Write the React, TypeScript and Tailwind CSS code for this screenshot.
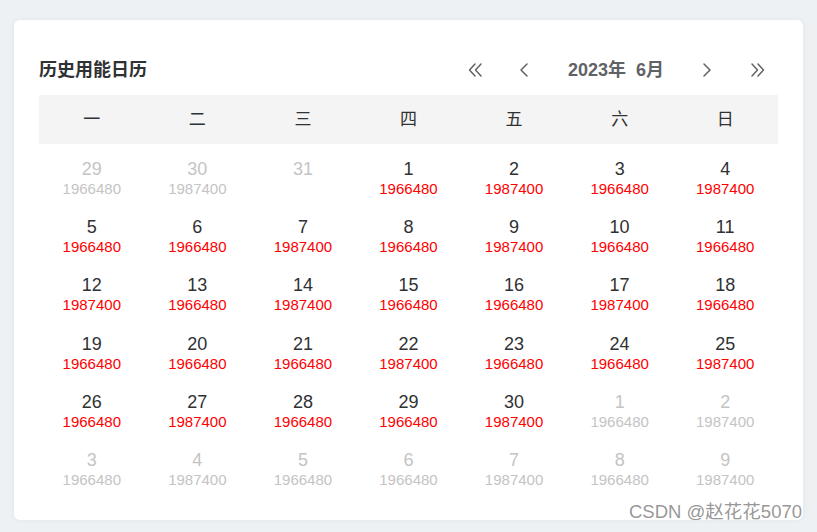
import React from 'react'

const A = '1966480'
const B = '1987400'

type Cell = { day: number; value?: string; other?: boolean }

const weekdays = ['一', '二', '三', '四', '五', '六', '日']

const cells: Cell[] = [
  { day: 29, value: A, other: true },
  { day: 30, value: B, other: true },
  { day: 31, other: true },
  { day: 1, value: A },
  { day: 2, value: B },
  { day: 3, value: A },
  { day: 4, value: B },
  { day: 5, value: A },
  { day: 6, value: A },
  { day: 7, value: B },
  { day: 8, value: A },
  { day: 9, value: B },
  { day: 10, value: A },
  { day: 11, value: A },
  { day: 12, value: B },
  { day: 13, value: A },
  { day: 14, value: B },
  { day: 15, value: A },
  { day: 16, value: A },
  { day: 17, value: B },
  { day: 18, value: A },
  { day: 19, value: A },
  { day: 20, value: A },
  { day: 21, value: A },
  { day: 22, value: B },
  { day: 23, value: A },
  { day: 24, value: A },
  { day: 25, value: B },
  { day: 26, value: A },
  { day: 27, value: B },
  { day: 28, value: A },
  { day: 29, value: A },
  { day: 30, value: B },
  { day: 1, value: A, other: true },
  { day: 2, value: B, other: true },
  { day: 3, value: A, other: true },
  { day: 4, value: B, other: true },
  { day: 5, value: A, other: true },
  { day: 6, value: A, other: true },
  { day: 7, value: B, other: true },
  { day: 8, value: A, other: true },
  { day: 9, value: B, other: true },
]

function Chevron({ dir, double }: { dir: 'left' | 'right'; double?: boolean }) {
  const flip = dir === 'right' ? 'scale(-1,1) translate(-18,0)' : undefined
  return (
    <svg width="18" height="16" viewBox="0 0 18 16" fill="none" stroke="#606266" strokeWidth="1.5" strokeLinecap="round" strokeLinejoin="round">
      <g transform={flip}>
        {double ? (
          <>
            <polyline points="8,2 2.5,8 8,14" />
            <polyline points="14,2 8.5,8 14,14" />
          </>
        ) : (
          <polyline points="12,2 6,8 12,14" />
        )}
      </g>
    </svg>
  )
}

export default function App() {
  return (
    <div
      className="relative w-[817px] h-[532px] bg-[#edf1f4] pt-[20px] pl-[14px] overflow-hidden"
      style={{ fontFamily: '"Liberation Sans", "Noto Sans CJK SC", sans-serif' }}
    >
      <div className="w-[789px] h-[500px] bg-white rounded-[6px] shadow-[0_0_6px_rgba(0,0,0,0.05)] px-[25px] pt-[34px]">
        {/* Header */}
        <div className="h-[32px] flex items-center justify-between">
          <h2 className="text-[18px] font-bold text-[#303133]">历史用能日历</h2>
          <div className="flex items-center text-[#606266] mr-[12px]">
            <button className="w-[18px] flex justify-center"><Chevron dir="left" double /></button>
            <button className="ml-[30px] w-[18px] flex justify-center"><Chevron dir="left" /></button>
            <span className="ml-[35px] text-[18px] font-bold">2023年&nbsp;&nbsp;6月</span>
            <button className="ml-[34px] w-[18px] flex justify-center"><Chevron dir="right" /></button>
            <button className="ml-[32px] w-[18px] flex justify-center"><Chevron dir="right" double /></button>
          </div>
        </div>

        {/* Weekdays */}
        <div className="mt-[9px] h-[49px] bg-[#f4f4f4] grid grid-cols-7 items-center">
          {weekdays.map((w) => (
            <div key={w} className="text-center text-[17px] text-[#303133]">{w}</div>
          ))}
        </div>

        {/* Days */}
        <div className="mt-[6px] grid grid-cols-7">
          {cells.map((c, i) => (
            <div key={i} className="h-[58.2px] flex flex-col items-center justify-center">
              <div className={`h-[20px] leading-[20px] text-[18px] ${c.other ? 'text-[#c4c4c4]' : 'text-[#303133]'}`}>{c.day}</div>
              <div className={`h-[20px] leading-[20px] text-[15px] ${c.other ? 'text-[#c4c4c4]' : 'text-[#ff0000]'}`}>{c.value ?? ''}</div>
            </div>
          ))}
        </div>
      </div>

      <div className="absolute right-[15px] bottom-[6px] text-[18.5px] text-[#8a8a8a]/90 [text-shadow:0_0_2px_rgba(255,255,255,0.8)]">
        CSDN @赵花花5070
      </div>
    </div>
  )
}
